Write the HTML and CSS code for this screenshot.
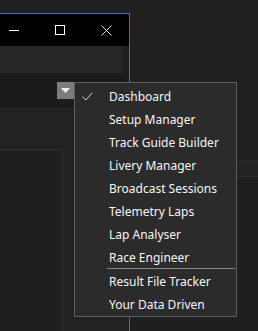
FILE: index.html
```html
<!DOCTYPE html>
<html>
<head>
<meta charset="utf-8">
<link rel="stylesheet" href="styles.css">
</head>
<body>
<div class="window">
  <div class="titlebar">
    <div class="tb-btn"><svg width="10" height="10" viewBox="0 0 10 10"><path d="M0 5.5H10" stroke="#fff" stroke-width="1"/></svg></div>
    <div class="tb-btn"><svg width="10" height="10" viewBox="0 0 10 10"><rect x="0.5" y="0.5" width="9" height="9" fill="none" stroke="#fff" stroke-width="1"/></svg></div>
    <div class="tb-btn"><svg width="11" height="11" viewBox="0 0 11 11"><path d="M0.5 0.5L10.5 10.5M10.5 0.5L0.5 10.5" stroke="#e6e6e6" stroke-width="1"/></svg></div>
  </div>
  <div class="toolbar">
    <div class="toolbar-main"></div>
    <div class="toolbar-edge"></div>
  </div>
  <div class="filter-row">
    <div class="drop-btn"><svg width="9" height="5" viewBox="0 0 9 5"><path d="M0 0H9L4.5 5Z" fill="#f2f2f2"/></svg></div>
  </div>
  <div class="pane">
    <div class="inner-panel"></div>
  </div>
</div>

<div class="menu">
  <div class="item"><span class="check"><svg width="11" height="9" viewBox="0 0 11 9"><path d="M0.5 4.5L3.8 8L10.3 0.6" fill="none" stroke="#d6d6d6" stroke-width="1"/></svg></span><span class="label">Dashboard</span></div>
  <div class="item"><span class="check"></span><span class="label">Setup Manager</span></div>
  <div class="item"><span class="check"></span><span class="label">Track Guide Builder</span></div>
  <div class="item"><span class="check"></span><span class="label">Livery Manager</span></div>
  <div class="item"><span class="check"></span><span class="label">Broadcast Sessions</span></div>
  <div class="item"><span class="check"></span><span class="label">Telemetry Laps</span></div>
  <div class="item"><span class="check"></span><span class="label">Lap Analyser</span></div>
  <div class="item"><span class="check"></span><span class="label">Race Engineer</span></div>
  <div class="separator"></div>
  <div class="item"><span class="check"></span><span class="label">Result File Tracker</span></div>
  <div class="item"><span class="check"></span><span class="label">Your Data Driven</span></div>
</div>
</body>
</html>
```

FILE: styles.css
```css
html, body {
  margin: 0;
  padding: 0;
}
body {
  width: 258px;
  height: 331px;
  overflow: hidden;
  position: relative;
  background:
    linear-gradient(#202020 0, #202020 161px, #2a2a2a 161px, #2a2a2a 162px, #232323 162px, #232323 176px, #2a2a2a 176px, #2a2a2a 177px, #1f1f1f 177px);
  font-family: "Noto Sans", "Open Sans", sans-serif;
}
.window {
  position: absolute;
  left: -10px;
  top: 13px;
  width: 139px;
  bottom: 0;
  border-top: 1px solid #1c7fd6;
  border-right: 1px solid #1c7fd6;
  background: #1c1c1c;
  display: flex;
  flex-direction: column;
}
.titlebar {
  height: 32px;
  background: #000;
  display: flex;
  justify-content: flex-end;
}
.tb-btn {
  width: 46px;
  height: 32px;
  display: flex;
  align-items: center;
  justify-content: center;
}
.tb-btn svg {
  display: block;
}
.toolbar {
  height: 27px;
  display: flex;
}
.toolbar-main {
  flex: 1;
  background: #262626;
}
.toolbar-edge {
  width: 6px;
  background: #1f1f1f;
}
.filter-row {
  background: #1b1b1b;
  border-bottom: 1px solid #2b2b2b;
  box-sizing: border-box;
  height: 36px;
  padding: 9px 0 0 67px;
}
.drop-btn {
  width: 17px;
  height: 17px;
  background: #7c7c7c;
  display: flex;
  align-items: center;
  justify-content: center;
}
.drop-btn svg {
  display: block;
}
.pane {
  flex: 1;
  background: #212121;
  padding-top: 40px;
  display: flex;
}
.inner-panel {
  width: 72px;
  border-top: 1px solid #303030;
  border-right: 1px solid #303030;
  background: #1f1f1f;
}
.menu {
  position: absolute;
  left: 74px;
  top: 82px;
  width: 161px;
  border: 1px solid #5e5e5e;
  background: #2b2b2b;
  padding: 1px 0;
  color: #f6f6f6;
  font-size: 12px;
}
.item {
  height: 23px;
  display: flex;
  align-items: center;
  white-space: nowrap;
}
.label {
  padding-top: 2px;
}
.check {
  width: 34px;
  height: 23px;
  flex: none;
  display: flex;
  align-items: center;
  padding-left: 7px;
  padding-top: 2px;
  box-sizing: border-box;
}
.check svg {
  display: block;
}
.separator {
  height: 1px;
  background: #8a8a8a;
  margin: 0 1px 0 32px;
}
```
